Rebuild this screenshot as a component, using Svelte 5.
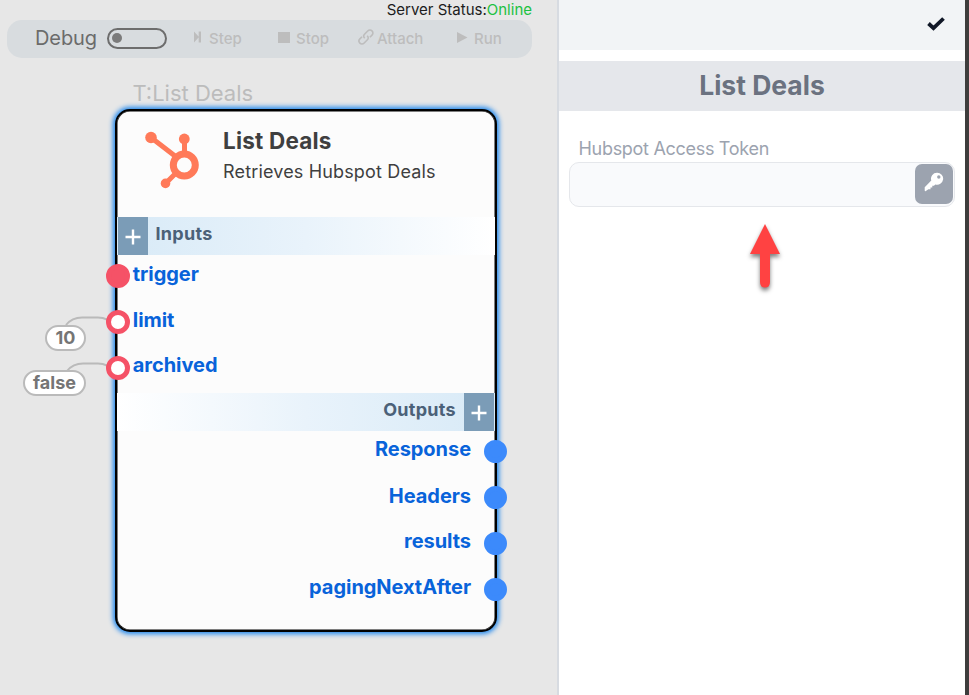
<script>
  const inputs = [
    { name: 'trigger', h: 46, dy: 0, filled: true },
    { name: 'limit', h: 45, dy: 0, filled: false },
    { name: 'archived', h: 46, dy: 1, filled: false }
  ];
  const outputs = [
    { name: 'Response', h: 47, dy: 1 },
    { name: 'Headers', h: 45, dy: 0 },
    { name: 'results', h: 46, dy: 1 },
    { name: 'pagingNextAfter', h: 46, dy: 1 }
  ];
</script>

<div class="app">
  <main class="canvas">
    <div class="status">Server Status:<span class="online">Online</span></div>
    <div class="toolbar">
      <span class="debug">Debug</span>
      <span class="toggle"><i></i></span>
      <span class="tool step">
        <svg width="9" height="12" viewBox="0 0 9 12"><path d="M1 0.500L6 6L1 11.500ZM5.700 0.500H8V11.500H5.700Z" /></svg>Step
      </span>
      <span class="tool stop">
        <svg width="12" height="11" viewBox="0 0 12 11"><path d="M0 0H12V11H0Z" /></svg>Stop
      </span>
      <span class="tool attach">
        <svg class="line" width="16" height="16" viewBox="0 0 16 16"><path d="M6.700 9.300C5.300 7.900 5.400 6.300 6.500 5.200L9.700 2C11 .7 12.900.7 14 1.900C15.200 3.100 15.200 4.900 14 6.100L11.900 8.200M9.200 6.700C10.600 8.100 10.500 9.700 9.400 10.800L6.200 14C4.900 15.300 3 15.300 1.900 14.100C.7 12.900.7 11.100 1.900 9.900L4 7.800" /></svg>Attach
      </span>
      <span class="tool run">
        <svg width="11" height="11" viewBox="0 0 11 11"><path d="M0 0L10.500 5.500L0 11Z" /></svg>Run
      </span>
    </div>

    <div class="node-tag">T:List Deals</div>
    <svg class="wires" width="120" height="110" viewBox="0 300 120 110">
      <path d="M66 325Q72 317.500 82 317.500H98Q103 317.500 107 319.500M67 371Q73 363.500 83 363.500H98Q103 363.500 107 365.500" />
    </svg>
    <span class="value limit-value">10</span>
    <span class="value archived-value">false</span>

    <section class="node">
      <header>
        <svg class="logo" width="56" height="58" viewBox="145 131 56 58">
          <path d="M151 137.500L175 156M184.500 139V153M166 183L177 172" />
          <circle class="ring" cx="184.300" cy="165" r="11" />
          <circle cx="151" cy="137.500" r="5.800" />
          <circle cx="184.300" cy="139" r="5.400" />
          <circle cx="165.500" cy="183.400" r="4.800" />
        </svg>
        <div class="heading">
          <h2>List Deals</h2>
          <p>Retrieves Hubspot Deals</p>
        </div>
      </header>
      <div class="bar in">
        <span class="plus"><svg width="16" height="16" viewBox="0 0 16 16"><path d="M8 .5V15.500M.5 8H15.500" /></svg></span>
        <b>Inputs</b>
      </div>
      <div class="ports ins">
        {#each inputs as port}
          <div class="port" style:height="{port.h}px">
            <span class="dot" class:filled={port.filled} style:margin-top="{port.dy}px"></span>
            <span class="name">{port.name}</span>
          </div>
        {/each}
      </div>
      <div class="bar out">
        <b>Outputs</b>
        <span class="plus"><svg width="16" height="16" viewBox="0 0 16 16"><path d="M8 .5V15.500M.5 8H15.500" /></svg></span>
      </div>
      <div class="ports outs">
        {#each outputs as port}
          <div class="port" style:height="{port.h}px">
            <span class="name">{port.name}</span>
            <span class="dot" style:margin-top="{port.dy}px"></span>
          </div>
        {/each}
      </div>
    </section>
  </main>

  <aside>
    <div class="topbar">
      <svg width="18" height="14" viewBox="0 0 18 14"><path d="M1.500 6.500L6.500 11.200L16.500 1.500" /></svg>
    </div>
    <h1>List Deals</h1>
    <label for="token">Hubspot Access Token</label>
    <div class="field">
      <input id="token" type="text" />
      <button aria-label="Select key">
        <svg width="20" height="20" viewBox="0 0 20 20"><path fill-rule="evenodd" d="M13 .7A6 6 0 1 1 11.300 12.400L10 13.700H8.300V15.400H6.500V17.200H4.400L1.500 19.200Q.7 19.300.7 18.300V15.200L7.300 8.600A6 6 0 0 1 13 .7ZM14.800 3.300A1.700 1.700 0 1 0 14.800 6.700A1.700 1.700 0 1 0 14.800 3.300Z" /></svg>
      </button>
    </div>
    <svg class="arrow" width="50" height="80" viewBox="0 0 50 80"><path d="M25 7L40 37H30V65Q30 70.500 25 70.500Q20 70.500 20 65V37H10Z" /></svg>
  </aside>
</div>

<style>
  :global(body) { overflow: hidden; }
  .app { display: flex; width: 969px; height: 695px; font-family: Inter, "Liberation Sans", sans-serif; box-sizing: border-box; }
  .app :global(*) { box-sizing: border-box; }
  svg { display: block; flex: none; }
  .canvas { position: relative; width: 557px; flex: none; background: #e7e7e7; overflow: hidden; }
  .status { height: 20px; padding-right: 25px; text-align: right; font-size: 15px; line-height: 19px; color: #1c1c1c; }
  .online { color: #1cc141; }
  .toolbar { display: flex; align-items: center; width: 525px; height: 38px; margin-left: 7px; padding: 0 0 2px 28px; border-radius: 15px; background: #d8dcdf; color: #bdbdbd; }
  .debug { width: 72px; font-size: 20px; line-height: 36px; color: #6b6b6b; letter-spacing: -0.1px; }
  .toggle { display: flex; align-items: center; width: 60px; height: 21px; padding-left: 3px; border: 2px solid #6d6d6d; border-radius: 11px; }
  .toggle i { width: 10px; height: 10px; border-radius: 50%; background: #7b7b7b; }
  .tool { display: flex; align-items: center; font-size: 15px; font-weight: 500; }
  .tool svg { fill: #bdbdbd; margin-bottom: 2px; }
  .tool svg.line { fill: none; stroke: #bdbdbd; stroke-width: 1.6; }
  .step { margin-left: 26px; width: 85px; gap: 7px; }
  .stop { width: 80px; gap: 6px; }
  .attach { width: 99px; gap: 3px; }
  .run { gap: 6px; }
  .node-tag { margin: 21px 0 0 132.500px; font-size: 22px; line-height: 28px; color: #bcbcbc; }
  .wires { position: absolute; left: 0; top: 300px; fill: none; stroke: #bababa; stroke-width: 2; }
  .value { position: absolute; height: 26px; border: 2px solid #bababa; border-radius: 13px; background: #fff; color: #757575; font-size: 18px; line-height: 22px; font-weight: 700; text-align: center; }
  .limit-value { left: 45px; top: 325px; width: 41px; }
  .archived-value { left: 23px; top: 370px; width: 63px; }
  .node { position: absolute; left: 115px; top: 109px; width: 382px; height: 523px; border: 2px solid #000; border-radius: 15px; background: #fcfcfc; box-shadow: 0 0 5px 2px #1c86ee, inset 0 0 0 0.500px #000; }
  header { display: flex; height: 106px; padding: 20px 0 0 28px; }
  .logo { fill: #ff7a59; }
  .logo path { fill: none; stroke: #ff7a59; stroke-width: 5; }
  .logo .ring { fill: none; stroke: #ff7a59; stroke-width: 7; }
  .heading { margin-left: 22px; color: #3f3f3f; white-space: nowrap; }
  h2 { margin: -4px 0 0; font-size: 22.500px; line-height: 28px; font-weight: 700; letter-spacing: 0.200px; }
  p { margin: 5px 0 0; font-size: 18px; line-height: 24px; letter-spacing: 0.160px; }
  .bar { display: flex; height: 38px; color: #4b6178; font-size: 18px; line-height: 34px; }
  .bar b { font-weight: 700; letter-spacing: 0.300px; }
  .in { padding-left: 1px; gap: 7.500px; background: linear-gradient(to right, #d8eaf7, #e9f3fb 50%, #f4f9fd 75%, #fff); }
  .out { justify-content: flex-end; gap: 8px; padding-right: 1px; background: linear-gradient(to left, #d8eaf7, #e9f3fb 50%, #f4f9fd 75%, #fff); }
  .plus { display: flex; align-items: center; justify-content: center; width: 30px; height: 38px; padding-top: 2px; background: #7b9cb7; }
  .plus svg { fill: none; stroke: #fff; stroke-width: 2.4; }
  .ports { color: #0863da; font-size: 20px; font-weight: 700; }
  .ins { height: 138px; padding-top: 9px; margin-left: -11px; }
  .outs { padding-top: 8px; margin-right: -12px; }
  .port { display: flex; gap: 3px; }
  .outs .port { justify-content: flex-end; gap: 12px; }
  .name { line-height: 20px; letter-spacing: -0.050px; }
  .ins .name { margin-left: -0.200px; }
  .dot { width: 24px; height: 24px; border-radius: 50%; background: #fff; border: 5px solid #f55267; flex: none; }
  .dot.filled { background: #f55267; }
  .outs .dot { width: 23px; height: 23px; margin-left: 1px; background: #3c8afb; border-color: #3c8afb; }
  aside { width: 412px; border-left: 2px solid #d7dbe1; border-right: 4px solid #3e3d3c; background: #fff; }
  .topbar { display: flex; justify-content: flex-end; height: 50px; padding: 17px 20px 0 0; background: #f2f4f6; }
  .topbar svg { fill: none; stroke: #111827; stroke-width: 3.8; }
  h1 { margin: 11px 0 0; height: 50px; text-align: center; background: #e5e7eb; color: #6b7280; font-size: 26.500px; line-height: 48px; font-weight: 700; }
  label { display: block; margin: 27px 0 0 19.500px; height: 24px; color: #9ca3af; font-size: 18px; line-height: 22px; letter-spacing: -0.300px; }
  .field { display: flex; width: 386px; height: 45px; margin-left: 10px; padding: 1px; border: 1px solid #e5e7eb; border-radius: 10px; background: #f9fafc; }
  input { flex: 1; min-width: 0; border: 0; padding: 0 10px; outline: none; background: transparent; }
  button { display: flex; justify-content: center; width: 38px; height: 40px; padding: 8px 0 0; border: 0; border-radius: 7px; background: #9ca3af; }
  button svg { fill: #fff; }
  .arrow { margin: 10px 0 0 181px; fill: #ff4242; filter: drop-shadow(0 3px 2px rgba(0, 0, 0, 0.5)); }
</style>
